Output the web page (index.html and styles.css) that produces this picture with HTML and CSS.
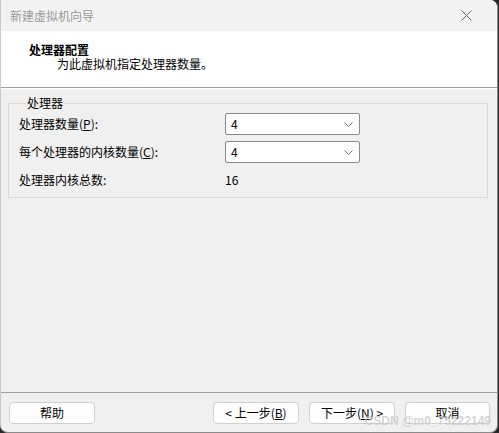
FILE: index.html
```html
<!DOCTYPE html>
<html lang="zh-CN">
<head>
<meta charset="utf-8">
<title>新建虚拟机向导</title>
<link rel="stylesheet" href="styles.css">
</head>
<body>
<div class="window">
  <div class="titlebar">
    <span class="title">新建虚拟机向导</span>
    <span class="close">
      <svg width="11" height="11" viewBox="0 0 11 11"><path d="M0.5 0.5 L10.5 10.5 M10.5 0.5 L0.5 10.5" stroke="#6b6b6b" stroke-width="1" fill="none"/></svg>
    </span>
  </div>
  <div class="header">
    <div class="h-title">处理器配置</div>
    <div class="h-sub">为此虚拟机指定处理器数量。</div>
  </div>
  <div class="main">
    <fieldset class="group">
      <legend class="legend">处理器</legend>
      <div class="grid">
        <div class="label">处理器数量(<u>P</u>):</div>
        <div class="combo"><span class="val">4</span><svg class="chev" width="9" height="5" viewBox="0 0 9 5"><path d="M0.5 0.5 L4.5 4.5 L8.5 0.5" stroke="#707070" stroke-width="1" fill="none"/></svg></div>
        <div class="label">每个处理器的内核数量(<u>C</u>):</div>
        <div class="combo"><span class="val">4</span><svg class="chev" width="9" height="5" viewBox="0 0 9 5"><path d="M0.5 0.5 L4.5 4.5 L8.5 0.5" stroke="#707070" stroke-width="1" fill="none"/></svg></div>
        <div class="label">处理器内核总数:</div>
        <div class="total">16</div>
      </div>
    </fieldset>
  </div>
  <div class="footer">
    <button class="btn">帮助</button>
    <div class="spacer"></div>
    <button class="btn">&lt; 上一步(<u>B</u>)</button>
    <button class="btn next">下一步(<u>N</u>) &gt;</button>
    <button class="btn cancel">取消</button>
  </div>
  <div class="watermark">CSDN @m0_75222149</div>
</div>
</body>
</html>
```
FILE: styles.css
```css
html, body {
  margin: 0;
  padding: 0;
  background: #2a2a2a;
}
body {
  width: 499px;
  height: 433px;
  overflow: hidden;
  font-family: "Noto Sans CJK SC", "Noto Sans", sans-serif;
  font-size: 12px;
  color: #000;
}
.window {
  position: relative;
  box-sizing: border-box;
  width: 498px;
  height: 433px;
  background: #f0f0f0;
  border: 1px solid #8c8c8c;
  border-top: none;
  border-left-color: #c8c8c8;
  border-radius: 0 8px 8px 8px;
  display: flex;
  flex-direction: column;
  overflow: hidden;
}
.titlebar {
  height: 31px;
  flex: none;
  background: #f3f3f3;
  display: flex;
  align-items: center;
  justify-content: space-between;
}
.title {
  margin-left: 9px;
  color: #9a9a9a;
  font-size: 12px;
  line-height: 14px;
}
.close {
  width: 11px;
  height: 11px;
  margin-right: 25px;
  display: flex;
}
.header {
  height: 56px;
  flex: none;
  background: #fff;
  border-bottom: 1px solid #a0a0a0;
  box-shadow: 0 1px 0 #ffffff;
  box-sizing: border-box;
  height: 57px;
}
.h-title {
  margin: 12px 0 0 28px;
  font-weight: bold;
  line-height: 14px;
}
.h-sub {
  margin: 0 0 0 56px;
  line-height: 14px;
}
.main {
  flex: 1;
  padding: 8px 8px 0 7px;
}
.group {
  margin: 0;
  padding: 0 0 6px 10px;
  border: 1px solid #dadada;
  width: 480px;
  box-sizing: border-box;
}
.legend {
  margin-left: 7px;
  padding: 0 1px;
  line-height: 14px;
  font-size: 12px;
}
.grid {
  display: grid;
  grid-template-columns: 206px 135px;
  grid-auto-rows: 22px;
  row-gap: 6px;
  padding-top: 3px;
  align-items: center;
}
.label {
  line-height: 14px;
}
.combo {
  box-sizing: border-box;
  height: 22px;
  background: #fff;
  border: 1px solid #8a8a8a;
  border-radius: 2px;
  display: flex;
  align-items: center;
  justify-content: space-between;
  padding: 0 6px 0 5px;
}
.val {
  line-height: 14px;
}
.chev {
  display: block;
}
.total {
  line-height: 14px;
}
.footer {
  height: 40px;
  flex: none;
  box-sizing: border-box;
  border-top: 1px solid #a0a0a0;
  display: flex;
  align-items: flex-start;
  padding: 9px 7px 0 8px;
}
.spacer {
  flex: 1;
}
.btn {
  width: 86px;
  height: 22px;
  box-sizing: border-box;
  background: #fdfdfd;
  border: 1px solid #d0d0d0;
  border-radius: 4px;
  font-family: "Noto Sans CJK SC", "Noto Sans", sans-serif;
  font-size: 12px;
  line-height: 14px;
  color: #000;
  padding: 0;
}
.next {
  margin-left: 10px;
}
.cancel {
  margin-left: 10px;
  width: 85px;
}
.watermark {
  position: absolute;
  right: 6px;
  bottom: 4px;
  color: rgba(200, 200, 200, 0.75);
  font-family: "Liberation Sans", sans-serif;
  font-size: 12px;
  font-weight: bold;
  line-height: 14px;
}
```
